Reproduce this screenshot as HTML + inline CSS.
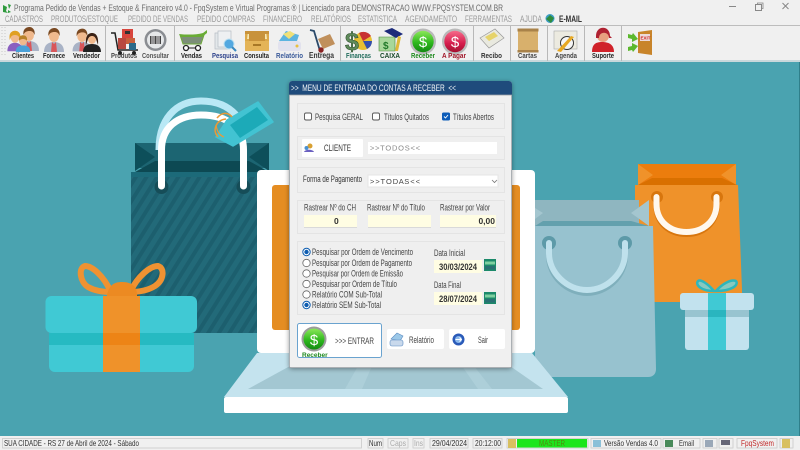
<!DOCTYPE html>
<html><head><meta charset="utf-8"><title>FpqSystem</title>
<style>
html,body{margin:0;padding:0;background:#f0f0f0;width:800px;height:450px;overflow:hidden}
svg{display:block;font-family:"Liberation Sans",sans-serif}
.m{font-size:9px;fill:#9a9a9a}
.tb{font-size:7px;font-weight:bold;fill:#222}
.l{font-size:8.800px;fill:#444}
.s{font-size:8.800px;fill:#444}
</style></head><body>
<svg width="800" height="450" viewBox="0 0 800 450" xmlns="http://www.w3.org/2000/svg">
<defs>
<filter id="b"><feGaussianBlur stdDeviation="0.35"/></filter>
<filter id="sh" x="-10%" y="-10%" width="120%" height="120%"><feDropShadow dx="0" dy="1" stdDeviation="2.5" flood-color="#000" flood-opacity=".4"/></filter>
<pattern id="st" width="9" height="9" patternUnits="userSpaceOnUse" patternTransform="rotate(32)"><rect width="9" height="9" fill="#236a79"/><rect width="4" height="9" fill="#1f5f6e"/></pattern>
<linearGradient id="gb" x1="0" y1="0" x2="0" y2="1"><stop offset="0" stop-color="#8ce85a"/><stop offset=".55" stop-color="#2fb81e"/><stop offset="1" stop-color="#128a10"/></linearGradient>
<linearGradient id="rb" x1="0" y1="0" x2="0" y2="1"><stop offset="0" stop-color="#f66a8a"/><stop offset=".6" stop-color="#d41c4c"/><stop offset="1" stop-color="#a30f30"/></linearGradient>
<g id="man"><path d="M-10 12c0-7 4-10 10-10s10 3 10 10z" fill="#a9b3c6"/><path d="M-2 2l2 2 2-2 1 10h-6z" fill="#d9575a"/><ellipse cx="0" cy="-4" rx="5" ry="6" fill="#f0b98d"/><path d="M-5.500-4c-1-6 3-8 6-8s6 3 5 8c-1-3-2-4-5-4s-5 1-6 4z" fill="#7a4a22"/></g>
<g id="rad"><circle r="3.700" fill="#fff" stroke="#666" stroke-width=".8"/></g>
<g id="radon"><circle r="3.700" fill="#fff" stroke="#0a5cb0" stroke-width="1"/><circle r="2.200" fill="#0a5cb0"/></g>
<g id="cal"><rect width="12" height="12" fill="#1f8a6b"/><rect x="1" y="2.500" width="10" height="3" fill="#7fd0a0"/><rect x="1" y="7" width="10" height="3.500" fill="#2a6f72"/></g>
</defs>

<!-- title + menu -->
<rect width="800" height="62" fill="#f0f0f0"/>
<g filter="url(#b)">
<path d="M3 5l4 2-1 4 2 2-5-1zM8 4l3 1-2 4zM8 10l3 2-3 1z" fill="#2e9a3c"/>
<text x="14" y="11" font-size="9.300" fill="#6c6c6c" textLength="489" lengthAdjust="spacingAndGlyphs">Programa Pedido de Vendas + Estoque &amp; Financeiro v4.0 - FpqSystem e Virtual Programas ® | Licenciado para  DEMONSTRACAO WWW.FPQSYSTEM.COM.BR</text>
<text x="5" y="22" class="m" textLength="38" lengthAdjust="spacingAndGlyphs">CADASTROS</text>
<text x="51" y="22" class="m" textLength="67" lengthAdjust="spacingAndGlyphs">PRODUTOS/ESTOQUE</text>
<text x="128" y="22" class="m" textLength="60" lengthAdjust="spacingAndGlyphs">PEDIDO DE VENDAS</text>
<text x="197" y="22" class="m" textLength="58" lengthAdjust="spacingAndGlyphs">PEDIDO COMPRAS</text>
<text x="263" y="22" class="m" textLength="39" lengthAdjust="spacingAndGlyphs">FINANCEIRO</text>
<text x="311" y="22" class="m" textLength="40" lengthAdjust="spacingAndGlyphs">RELATÓRIOS</text>
<text x="358" y="22" class="m" textLength="39" lengthAdjust="spacingAndGlyphs">ESTATISTICA</text>
<text x="405" y="22" class="m" textLength="52" lengthAdjust="spacingAndGlyphs">AGENDAMENTO</text>
<text x="465" y="22" class="m" textLength="47" lengthAdjust="spacingAndGlyphs">FERRAMENTAS</text>
<text x="520" y="22" class="m" textLength="22" lengthAdjust="spacingAndGlyphs">AJUDA</text>
<circle cx="550" cy="18.500" r="4.500" fill="#3d9cc4"/><path d="M546 19l4-4 4 3-3 5z" fill="#2e8c3c"/>
<text x="559" y="22" font-size="9" font-weight="bold" fill="#333" textLength="23" lengthAdjust="spacingAndGlyphs">E-MAIL</text>
<!-- window controls -->
<path d="M729 6.500h7" stroke="#888" stroke-width="1"/>
<rect x="755.500" y="4.500" width="6" height="6" fill="none" stroke="#888"/><path d="M757.500 4v-1h5.500v5.500h-1" fill="none" stroke="#888" stroke-width=".8"/>
<path d="M782.500 3l6 6m0-6l-6 6" stroke="#888" stroke-width="1"/>
</g>

<!-- toolbar -->
<rect x="0" y="25" width="800" height="1" fill="#bdbdbd"/>
<rect x="0" y="60" width="800" height="2" fill="#c9d8db"/>
<g fill="#b8b8b8">
<rect x="105" y="26" width="1" height="35"/><rect x="174" y="26" width="1" height="35"/><rect x="340" y="26" width="1" height="35"/><rect x="473" y="26" width="1" height="35"/><rect x="510" y="26" width="1" height="35"/><rect x="547" y="26" width="1" height="35"/><rect x="584" y="26" width="1" height="35"/><rect x="621" y="26" width="1" height="35"/>
</g>
<path d="M2 27v30M5 27v30" stroke="#c8c8c8" stroke-width="1" stroke-dasharray="1 2"/>
<g filter="url(#b)">
<!-- people -->
<use href="#man" transform="translate(29,39)"/>
<g transform="translate(15,41) scale(.85)"><path d="M-9 12c0-7 4-10 9-10s9 3 9 10z" fill="#8a5fc0"/><ellipse cx="0" cy="-4" rx="5" ry="6" fill="#f0b98d"/><path d="M-6-1c-2-9 3-11 6-11s8 2 6 11c-1-4-2-6-6-6s-5 2-6 6z" fill="#e0a020"/></g>
<g transform="translate(23,44) scale(.8)"><path d="M-9 10c0-7 4-8 9-8s9 1 9 8z" fill="#4aa0d8"/><ellipse cx="0" cy="-4" rx="5" ry="5.500" fill="#f0b98d"/><path d="M-5-4c-1-6 3-7 5-7s6 1 5 7c-2-3-8-3-10 0z" fill="#b8822a"/></g>
<g transform="translate(54,40)"><use href="#man"/></g>
<use href="#man" transform="translate(82,40) scale(.95)"/>
<g transform="translate(92,43)"><path d="M-9 9c0-6 4-8 9-8s9 2 9 8z" fill="#222"/><ellipse cx="0" cy="-4" rx="4" ry="5" fill="#f0b98d"/><path d="M-6 2c-1-10 3-12 6-12s7 2 6 12l-2-6c-1-2-2-3-4-3s-3 1-4 3z" fill="#3a2212"/></g>
<!-- produtos -->
<path d="M111 33h4l3 17h20" fill="none" stroke="#222" stroke-width="1.500"/><rect x="122" y="29" width="11" height="9" fill="#d8443c"/><rect x="125" y="31" width="5" height="3" fill="#333"/><rect x="118" y="38" width="8" height="11" fill="#b84a40"/><rect x="126" y="38" width="9" height="6" fill="#c8603c"/><rect x="129" y="43" width="7" height="7" fill="#2a6a8a"/><circle cx="120" cy="53" r="2" fill="#222"/><circle cx="134" cy="53" r="2" fill="#222"/>
<!-- consultar -->
<circle cx="155.500" cy="40" r="11" fill="#8a8d92"/><circle cx="155.500" cy="40" r="8.500" fill="#e6e8ea"/><g fill="#444"><rect x="150" y="36" width="1.500" height="8"/><rect x="152.500" y="36" width="1" height="8"/><rect x="154.500" y="36" width="2" height="8"/><rect x="157.500" y="36" width="1" height="8"/><rect x="159.500" y="36" width="1.500" height="8"/></g>
<!-- vendas -->
<path d="M180 35h24l-3 9h-18z" fill="#7b8e78" stroke="#6ea93a"/><path d="M179 34c8 1 17 1 24-1l4-3 0 3-5 4h-21z" fill="#69ac36"/><circle cx="186" cy="48" r="2.500" fill="#fff" stroke="#222" stroke-width="1.300"/><circle cx="198" cy="48" r="2.500" fill="#fff" stroke="#222" stroke-width="1.300"/><path d="M188 48h8" stroke="#222"/>
<!-- pesquisa -->
<rect x="215" y="33" width="13" height="16" fill="#e3e7ea" stroke="#b5bcc4" stroke-width=".7"/><rect x="218" y="31" width="13" height="16" fill="#eef0f2" stroke="#b5bcc4" stroke-width=".7"/><circle cx="229" cy="44" r="5" fill="#52a8e0" stroke="#bfe0f0"/><path d="M232 47l4 4" stroke="#3a8ac0" stroke-width="2"/>
<!-- consulta -->
<path d="M245 34h24v17h-24z" fill="#dba848"/><path d="M248 31h18l1 8h-20z" fill="#f6e6b0"/><path d="M245 34h4v7h16v-7h4v-3h-24z" fill="#c8923a"/><path d="M245 41h24v10h-24z" fill="#e4b458"/><rect x="253" y="44" width="8" height="2" fill="#a87828"/>
<!-- relatorio -->
<path d="M279 41l7-10 13 4-3 9z" fill="#5cb4e0"/><path d="M283 34l7-3 5 3-6 5z" fill="#f0e078"/><rect x="278" y="41" width="23" height="10" rx="3" fill="#e2e2ee"/><circle cx="297" cy="46" r="1.500" fill="#e8c040"/>
<!-- entrega -->
<path d="M310 30l4 1 6 20" fill="none" stroke="#2a4a6a" stroke-width="1.800"/><path d="M318 39l12-5 5 10-12 5z" fill="#c0905c"/><circle cx="321" cy="50" r="2.700" fill="#8a2020"/>
<!-- financas -->
<circle cx="363" cy="41" r="9" fill="#e8c030"/><path d="M363 41l-4-8a9 9 0 0 1 12 3z" fill="#c83030"/><path d="M363 41h9a9 9 0 0 1-5 8z" fill="#3050b0"/><text x="345" y="50" font-size="25" font-weight="bold" fill="#5f8a5a" stroke="#2a4a2a" stroke-width=".5">$</text>
<!-- caixa -->
<path d="M379 37h16v14h-16z" fill="#a8d89a" stroke="#4a8a3a" stroke-width=".6"/><text x="383" y="49" font-size="10" font-weight="bold" fill="#227a2a">$</text><path d="M384 31l8-3 11 6-7 4z" fill="#1a2a7a"/><path d="M398 36l3 1-3 14-3 0z" fill="#e0b838"/>
<!-- receber/apagar -->
<circle cx="423" cy="41.500" r="13" fill="#b9b9b9"/><circle cx="423" cy="41.500" r="10.700" fill="url(#gb)"/><text x="423" y="47" font-size="15" fill="#fff" text-anchor="middle">$</text>
<circle cx="455" cy="41.500" r="13" fill="#b9b9b9"/><circle cx="455" cy="41.500" r="10.700" fill="url(#rb)"/><text x="455" y="47" font-size="15" fill="#fff" text-anchor="middle">$</text>
<!-- recibo -->
<path d="M480 38l15-9 9 9-15 10z" fill="#e9e9df" stroke="#999" stroke-width=".7"/><path d="M485 37l9-5 4 4-9 5z" fill="#e6d36a"/>
<!-- cartas -->
<rect x="518" y="30" width="20" height="21" fill="#d8b06c"/><rect x="517.500" y="28.500" width="21" height="3" fill="#a98248"/><rect x="517.500" y="50" width="21" height="2.500" fill="#a98248"/>
<!-- agenda -->
<rect x="554" y="31" width="23" height="18" fill="#eceae0" stroke="#aaa" stroke-width=".6"/><circle cx="567" cy="43" r="6.500" fill="#f5f5f5" stroke="#333"/><path d="M557 51l14-15 3 1-13 15z" fill="#e8a820"/>
<!-- suporte -->
<path d="M592 52c0-8 4-10 10-10s12 2 12 10z" fill="#d0202c"/><circle cx="603" cy="36" r="6" fill="#e8a080"/><path d="M596 36c0-11 14-11 14 0l2 2-3 0c0-7-10-7-10 0h-3z" fill="#b02030"/>
<!-- exit -->
<path d="M638 32l14-2v25l-14-2z" fill="#c8842c"/><rect x="640" y="34" width="10" height="7" fill="#ecdada"/><text x="640.500" y="39.500" font-size="4.500" font-weight="bold" fill="#d02020">EXIT</text><path d="M628 34l4 1 1-2 5 6-6 3 0-3-4-1zM628 51l4-1 1 2 5-6-6-3 0 3-4 1z" fill="#5cb82e"/>
<!-- labels -->
<text x="12" y="58" class="tb" textLength="22" lengthAdjust="spacingAndGlyphs">Clientes</text>
<text x="43" y="58" class="tb" textLength="22" lengthAdjust="spacingAndGlyphs">Fornece</text>
<text x="73" y="58" class="tb" textLength="27" lengthAdjust="spacingAndGlyphs">Vendedor</text>
<text x="111" y="58" class="tb" style="fill:#444" textLength="26" lengthAdjust="spacingAndGlyphs">Produtos</text>
<text x="142" y="58" class="tb" style="fill:#555" textLength="27" lengthAdjust="spacingAndGlyphs">Consultar</text>
<text x="181" y="58" class="tb" textLength="21" lengthAdjust="spacingAndGlyphs">Vendas</text>
<text x="212" y="58" class="tb" style="fill:#2a3f8a" textLength="26" lengthAdjust="spacingAndGlyphs">Pesquisa</text>
<text x="244" y="58" class="tb" textLength="25" lengthAdjust="spacingAndGlyphs">Consulta</text>
<text x="276" y="58" class="tb" style="fill:#3a5a9a" textLength="27" lengthAdjust="spacingAndGlyphs">Relatório</text>
<text x="309" y="58" class="tb" style="font-size:7.800px;fill:#333" textLength="25" lengthAdjust="spacingAndGlyphs">Entrega</text>
<text x="346" y="58" class="tb" style="fill:#1f6a5a" textLength="25" lengthAdjust="spacingAndGlyphs">Finanças</text>
<text x="380" y="58" class="tb" style="fill:#1a4a2a" textLength="20" lengthAdjust="spacingAndGlyphs">CAIXA</text>
<text x="411" y="58" class="tb" style="fill:#1f8a1f" textLength="24" lengthAdjust="spacingAndGlyphs">Receber</text>
<text x="442" y="58" class="tb" style="fill:#a01428" textLength="24" lengthAdjust="spacingAndGlyphs">A Pagar</text>
<text x="481" y="58" class="tb" style="font-size:7.500px;fill:#333" textLength="21" lengthAdjust="spacingAndGlyphs">Recibo</text>
<text x="518" y="58" class="tb" style="font-size:7.500px;fill:#444" textLength="19" lengthAdjust="spacingAndGlyphs">Cartas</text>
<text x="555" y="58" class="tb" style="fill:#444" textLength="22" lengthAdjust="spacingAndGlyphs">Agenda</text>
<text x="592" y="58" class="tb" textLength="22" lengthAdjust="spacingAndGlyphs">Suporte</text>
</g>

<!-- background art -->
<rect x="0" y="62" width="800" height="374" fill="#4aa3b0"/>
<rect x="799" y="62" width="1" height="374" fill="#2f7f8a"/>
<g filter="url(#b)">
<!-- dark bag -->
<rect x="135" y="143" width="134" height="25" fill="#1e6572"/>
<path d="M135 143l20 14-20 14zM269 143l-20 14 20 14z" fill="#0f4f5a"/>
<path d="M135 172l20-11h94l20 11z" fill="#0e4a53"/>
<path d="M131 172h137v161h-137z" fill="url(#st)"/>
<rect x="131" y="172" width="137" height="5" fill="#1f6a79"/>
<circle cx="161.500" cy="187" r="7" fill="#144e58"/><circle cx="243.500" cy="187" r="7" fill="#144e58"/>
<path d="M159 150C159 120 175 101 201 101C216 101 228 106 236 115" fill="none" stroke="#b9e8f5" stroke-width="7"/>
<path d="M161.500 186V150C161.500 127 178 115 201 115C228 115 243.500 128 243.500 150V186" fill="none" stroke="#fff" stroke-width="7" stroke-linecap="round"/>
<!-- tag -->
<path d="M216 137L227 120L258 102L273 122L233 146z" fill="#43c3d2" stroke="#43c3d2" stroke-linejoin="round" stroke-width="1.500"/>
<path d="M230 125L257 107L268 120L240 138z" fill="#1eaab8"/>
<path d="M226 119C216 120 212 130 218 137" fill="none" stroke="#e99a37" stroke-width="1.500"/>
<path d="M217 118C222 112 228 112 232 117" fill="none" stroke="#e99a37" stroke-width="1.500"/>
<path d="M216 125c1 6 3 10 8 12" fill="none" stroke="#e99a37" stroke-width="1.200"/>
<!-- big gift -->
<path d="M111 292C103 275 92 266 85 266C78 268 80 282 88 287C95 291 103 292 111 292z" fill="none" stroke="#ef9230" stroke-width="6"/>
<path d="M130 292C138 276 150 266 158 266C165 268 164 280 155 286C147 291 138 292 130 292z" fill="none" stroke="#ef9230" stroke-width="6"/>
<path d="M107 295c2-9 6-13 15-13s15 4 15 13v3h-30z" fill="#ec8a22"/>
<rect x="45.500" y="296" width="151.500" height="37" rx="6" fill="#41c9d4"/>
<path d="M49 333h145v33a6 6 0 0 1-6 6h-133a6 6 0 0 1-6-6z" fill="#41c9d4"/>
<rect x="49" y="333" width="145" height="12" fill="#27bac2"/>
<rect x="103" y="296" width="37" height="76" fill="#ef922c"/>
<rect x="103" y="333" width="37" height="12" fill="#ed8414"/>
<!-- orange bag -->
<rect x="638" y="164" width="98" height="21" fill="#ec7d0a"/>
<path d="M638 164l15 11-15 10zM736 164l-15 11 15 10z" fill="#f0922c"/>
<path d="M635 185h103l4 105 0 12h-107z" fill="#ef922c"/>
<path d="M638 185l14-7h70l15 7z" fill="#d96f06"/>
<circle cx="657" cy="197" r="6" fill="#d87610"/><circle cx="717" cy="197" r="6" fill="#d87610"/>
<path d="M656.500 197v7c0 17 13 28 30 28s30-11 30-28v-7" fill="none" stroke="#d87610" stroke-width="6" stroke-linecap="round" transform="translate(0,2)"/>
<path d="M656.500 197v7c0 17 13 28 30 28s30-11 30-28v-7" fill="none" stroke="#fff8ee" stroke-width="6" stroke-linecap="round"/>
<!-- light bag -->
<rect x="535" y="200" width="104" height="26" fill="#8fb6c0"/>
<path d="M535 208l8 5-8 6zM649 200l-18 13 18 13z" fill="#a4c6cf"/>
<path d="M535 226l8-5h88l18 5z" fill="#64a0ad"/>
<path d="M535 226h118l3 143c0 5-3 8-8 8h-113z" fill="#97c2cf"/>
<circle cx="549" cy="243" r="7" fill="#5d9aa8"/><circle cx="625" cy="243" r="7" fill="#5d9aa8"/>
<path d="M549 243v10c0 20 18 37 38 37s38-17 38-37v-10" fill="none" stroke="#7fafbc" stroke-width="6" stroke-linecap="round" transform="translate(0,3)"/>
<path d="M549 243v10c0 20 18 37 38 37s38-17 38-37v-10" fill="none" stroke="#bfe1ec" stroke-width="6" stroke-linecap="round"/>
<!-- small gift -->
<path d="M714 291c-6-7-13-12-16-10-3 4 3 10 16 10zM716 291c6-7 15-12 20-10 3 4-4 10-20 10z" fill="#88c9c0" stroke="#2fb6bc" stroke-width="2.500"/>
<rect x="680" y="293" width="74" height="17" rx="3" fill="#c2e2ee"/>
<path d="M685 310h64v37a3 3 0 0 1-3 3h-58a3 3 0 0 1-3-3z" fill="#c2e2ee"/>
<rect x="685" y="310" width="64" height="7" fill="#98c4d0"/>
<rect x="708" y="293" width="18" height="57" fill="#41c9d4"/>
<rect x="708" y="310" width="18" height="7" fill="#2bb5bf"/>
<!-- laptop -->
<path d="M257 353h275l36 44h-344z" fill="#c4e3ee"/>
<path d="M248 389L290 366H510L543 389z" fill="#a3c7d2"/>
<path d="M345 389L358 366H372L362 389zM462 366H474L492 389H478z" fill="#adcfd9"/>
<rect x="224" y="397" width="344" height="16" rx="2" fill="#fff"/>
<rect x="257" y="170" width="278" height="183" rx="4" fill="#fff"/>
<rect x="272" y="185" width="248" height="145" rx="3" fill="#e58d24"/>
</g>

<!-- dialog -->
<g filter="url(#sh)">
<rect x="289" y="81" width="223" height="287" rx="3" fill="#f0f0f0"/>
</g>
<path d="M289 95v-11a3 3 0 0 1 3-3h217a3 3 0 0 1 3 3v11z" fill="#1f4b7c"/>
<rect x="289.500" y="95" width="222" height="272.500" fill="none" stroke="#9aa0a6" stroke-width=".8"/>
<g filter="url(#b)">
<text x="291" y="91" font-size="9" fill="#f2f5f8" textLength="165" xml:space="preserve" lengthAdjust="spacingAndGlyphs">&gt;&gt;  MENU DE ENTRADA DO CONTAS A RECEBER  &lt;&lt;</text>
<!-- group boxes -->
<g fill="#efefef" stroke="#e4e4e4" stroke-width="1">
<rect x="297.500" y="103.500" width="207" height="25"/>
<rect x="297.500" y="136.500" width="207" height="23"/>
<rect x="297.500" y="167.500" width="207" height="25"/>
<rect x="297.500" y="200.500" width="207" height="33"/>
<rect x="297.500" y="241.500" width="207" height="73"/>
</g>
<!-- checks -->
<rect x="304.500" y="113" width="7" height="7" rx="1.500" fill="#fff" stroke="#555" stroke-width=".9"/>
<text x="315" y="120" class="l" textLength="48" lengthAdjust="spacingAndGlyphs">Pesquisa GERAL</text>
<rect x="372.500" y="113" width="7" height="7" rx="1.500" fill="#fff" stroke="#555" stroke-width=".9"/>
<text x="384" y="120" class="l" textLength="45" lengthAdjust="spacingAndGlyphs">Títulos Quitados</text>
<rect x="442" y="112.500" width="8" height="8" rx="1.500" fill="#0a5cb8"/><path d="M444 116.500l1.500 1.500 2.500-3" fill="none" stroke="#fff" stroke-width=".9"/>
<text x="453" y="120" class="l" textLength="41" lengthAdjust="spacingAndGlyphs">Títulos Abertos</text>
<!-- cliente -->
<rect x="302" y="139" width="61" height="18" rx="1" fill="#fff"/>
<circle cx="310" cy="146" r="2.500" fill="#d8a030"/><circle cx="306.500" cy="148" r="2" fill="#4a90d0"/><path d="M304 152c1-3 9-3 10 0z" fill="#6a60c0"/>
<text x="324" y="151" font-size="8.800" fill="#333" textLength="27" lengthAdjust="spacingAndGlyphs">CLIENTE</text>
<rect x="368" y="142" width="129" height="12" fill="#fff"/>
<text x="370" y="150.500" font-size="7.500" fill="#888" textLength="50">&gt; &gt; T O D O S &lt; &lt;</text>
<!-- forma -->
<text x="303" y="182" class="l" style="fill:#333" textLength="59" lengthAdjust="spacingAndGlyphs">Forma de Pagamento</text>
<rect x="368" y="175" width="130" height="12" fill="#fff" stroke="#e5e5e5"/>
<text x="370" y="184" font-size="7.500" fill="#444" textLength="50">&gt; &gt; T O D A S &lt; &lt;</text>
<path d="M492 180l2.500 2.500 2.500-2.500" fill="none" stroke="#777" stroke-width=".8"/>
<!-- rastrear -->
<text x="304" y="210.500" class="l" textLength="52" lengthAdjust="spacingAndGlyphs">Rastrear Nº do CH</text>
<text x="367" y="210.500" class="l" textLength="58" lengthAdjust="spacingAndGlyphs">Rastrear Nº do Título</text>
<text x="440" y="210.500" class="l" textLength="50" lengthAdjust="spacingAndGlyphs">Rastrear por Valor</text>
<rect x="304" y="215" width="53" height="12" fill="#fffde3"/><rect x="304" y="227" width="53" height="1" fill="#d9d9d9"/>
<rect x="368" y="215" width="63" height="12" fill="#fffde3"/><rect x="368" y="227" width="63" height="1" fill="#d9d9d9"/>
<rect x="440" y="215" width="56" height="12" fill="#fffde3"/><rect x="440" y="227" width="56" height="1" fill="#d9d9d9"/>
<text x="334" y="224" font-size="8.500" font-weight="bold" fill="#333">0</text>
<text x="495" y="224" font-size="8.500" font-weight="bold" fill="#333" text-anchor="end">0,00</text>
<!-- radios -->
<use href="#radon" x="306.500" y="252"/><use href="#rad" x="306.500" y="263"/><use href="#rad" x="306.500" y="273.500"/><use href="#rad" x="306.500" y="284"/><use href="#rad" x="306.500" y="294.500"/><use href="#radon" x="306.500" y="305"/>
<text x="312" y="255" class="s" textLength="101" lengthAdjust="spacingAndGlyphs">Pesquisar por Ordem de Vencimento</text>
<text x="312" y="266" class="s" textLength="100" lengthAdjust="spacingAndGlyphs">Pesquisar por Ordem de Pagamento</text>
<text x="312" y="276.500" class="s" textLength="91" lengthAdjust="spacingAndGlyphs">Pesquisar por Ordem de Emissão</text>
<text x="312" y="287" class="s" textLength="85" lengthAdjust="spacingAndGlyphs">Pesquisar por Ordem de Título</text>
<text x="312" y="297.500" class="s" textLength="70" lengthAdjust="spacingAndGlyphs">Relatório COM Sub-Total</text>
<text x="312" y="308" class="s" textLength="69" lengthAdjust="spacingAndGlyphs">Relatório SEM Sub-Total</text>
<!-- dates -->
<text x="434" y="256" class="l" textLength="31" lengthAdjust="spacingAndGlyphs">Data Inicial</text>
<rect x="434" y="260" width="48" height="13" fill="#fffde3"/>
<text x="439" y="270" font-size="9" font-weight="bold" fill="#333" textLength="38" lengthAdjust="spacingAndGlyphs">30/03/2024</text>
<use href="#cal" x="484" y="259"/>
<text x="434" y="288" class="l" textLength="27" lengthAdjust="spacingAndGlyphs">Data Final</text>
<rect x="434" y="292" width="48" height="13" fill="#fffde3"/>
<text x="439" y="302" font-size="9" font-weight="bold" fill="#333" textLength="38" lengthAdjust="spacingAndGlyphs">28/07/2024</text>
<use href="#cal" x="484" y="292"/>
<!-- buttons -->
<rect x="297.500" y="323.500" width="84" height="34" rx="2" fill="#fff" stroke="#6aa3cf" stroke-width="1"/>
<circle cx="314" cy="339" r="12.500" fill="#9c9c9c"/><circle cx="314" cy="339" r="10.500" fill="url(#gb)"/><text x="314" y="345" font-size="15" fill="#fff" text-anchor="middle">$</text>
<text x="302" y="357" font-size="6.500" font-weight="bold" fill="#1f8a1f">Receber</text>
<text x="335" y="344" font-size="8.800" fill="#444" textLength="39" lengthAdjust="spacingAndGlyphs">&gt;&gt;&gt; ENTRAR</text>
<rect x="387" y="329" width="57" height="20" rx="2" fill="#fff"/>
<path d="M391 339l6-6 6 3-3 5z" fill="#9cc8e8" stroke="#5a8ac0" stroke-width=".6"/><rect x="390" y="340" width="13" height="6" rx="2" fill="#c9d9ec" stroke="#5a8ac0" stroke-width=".6"/>
<text x="409" y="343" font-size="8.800" fill="#444" textLength="25" lengthAdjust="spacingAndGlyphs">Relatório</text>
<rect x="449" y="329" width="56" height="20" rx="2" fill="#fff"/>
<circle cx="458.500" cy="339.500" r="6" fill="#2a5ab8"/><circle cx="458.500" cy="339.500" r="3.500" fill="#8ab8ec"/><path d="M455.500 339.500h6m-2-2l2 2-2 2" fill="none" stroke="#fff" stroke-width="1"/>
<text x="478" y="343" font-size="8.800" fill="#444" textLength="10" lengthAdjust="spacingAndGlyphs">Sair</text>
</g>

<!-- status bar -->
<rect x="0" y="436" width="800" height="14" fill="#f0f0f0"/>
<g fill="#f0f0f0" stroke="#cacaca" stroke-width=".8">
<rect x="2.500" y="438.500" width="359" height="9.500"/>
<rect x="368" y="438.500" width="15" height="9.500"/>
<rect x="388" y="438.500" width="20" height="9.500"/>
<rect x="413" y="438.500" width="11" height="9.500"/>
<rect x="430" y="438.500" width="38" height="9.500"/>
<rect x="473" y="438.500" width="29" height="9.500"/>
<rect x="507" y="438.500" width="81" height="9.500"/>
<rect x="591" y="438.500" width="70" height="9.500"/>
<rect x="663" y="438.500" width="37" height="9.500"/>
<rect x="703" y="438.500" width="14" height="9.500"/>
<rect x="719" y="438.500" width="14" height="9.500"/>
<rect x="737" y="438.500" width="40" height="9.500"/>
<rect x="780" y="438.500" width="13" height="9.500"/>
</g>
<g filter="url(#b)">
<text x="4" y="446" font-size="8.500" fill="#333" textLength="135" lengthAdjust="spacingAndGlyphs">SUA CIDADE - RS 27 de Abril de 2024 - Sábado</text>
<text x="369" y="446" font-size="8.500" fill="#333" textLength="13" lengthAdjust="spacingAndGlyphs">Num</text>
<text x="390" y="446" font-size="8.500" fill="#aaa" textLength="16" lengthAdjust="spacingAndGlyphs">Caps</text>
<text x="414" y="446" font-size="8.500" fill="#aaa" textLength="9" lengthAdjust="spacingAndGlyphs">Ins</text>
<text x="432" y="446" font-size="8.500" fill="#333" textLength="35" lengthAdjust="spacingAndGlyphs">29/04/2024</text>
<text x="475" y="446" font-size="8.500" fill="#333" textLength="26" lengthAdjust="spacingAndGlyphs">20:12:00</text>
<rect x="508" y="439" width="8" height="9" fill="#d8c060"/>
<rect x="517" y="439" width="70" height="8.500" fill="#1ee61e"/>
<text x="539" y="446" font-size="8.500" fill="#4f8a10" textLength="26" lengthAdjust="spacingAndGlyphs">MASTER</text>
<rect x="593" y="440" width="8" height="7" fill="#8ac0d8"/>
<text x="604" y="446" font-size="8.500" fill="#333" textLength="54" lengthAdjust="spacingAndGlyphs">Versão Vendas 4.0</text>
<rect x="665" y="440" width="8" height="7" fill="#4a8a5a"/>
<text x="679" y="446" font-size="8.500" fill="#333" textLength="15" lengthAdjust="spacingAndGlyphs">Email</text>
<rect x="705" y="440" width="8" height="7" fill="#9aa8b8"/>
<rect x="721" y="440" width="9" height="5" fill="#667"/>
<text x="741" y="446" font-size="8.500" fill="#c02828" textLength="33" lengthAdjust="spacingAndGlyphs">FpqSystem</text>
<rect x="782" y="439" width="8" height="9" fill="#d8c060"/>
</g>
</svg>
</body></html>
